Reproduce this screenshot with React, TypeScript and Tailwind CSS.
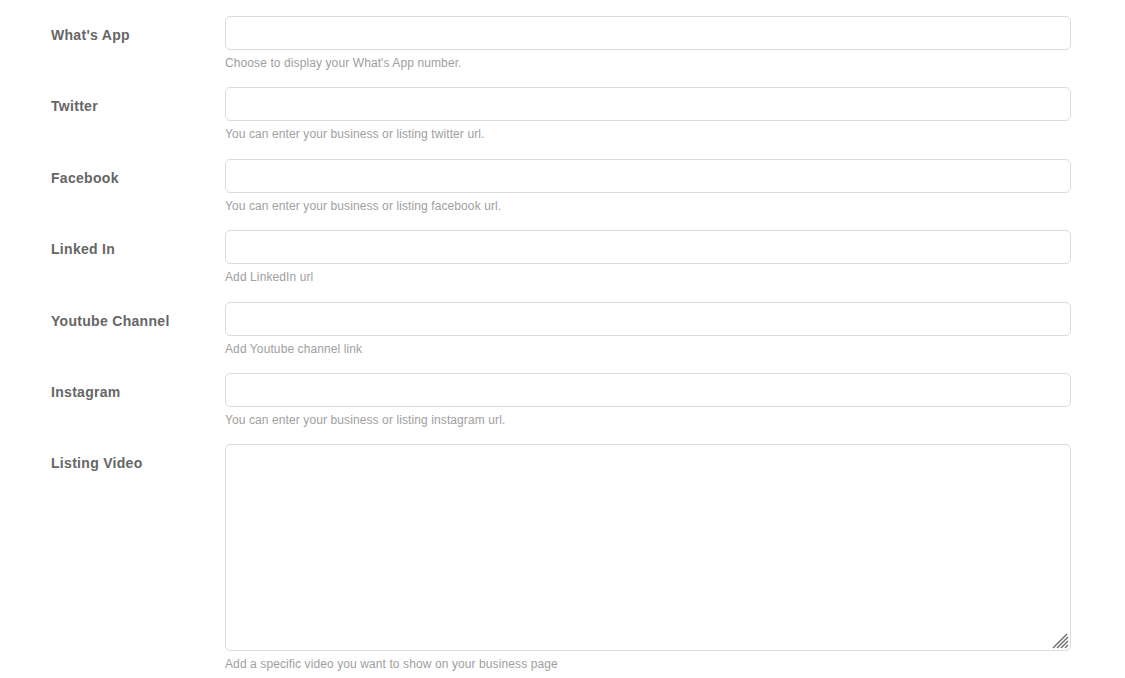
const fields = [
  { label: "What's App", help: "Choose to display your What's App number." },
  { label: 'Twitter', help: 'You can enter your business or listing twitter url.' },
  { label: 'Facebook', help: 'You can enter your business or listing facebook url.' },
  { label: 'Linked In', help: 'Add LinkedIn url' },
  { label: 'Youtube Channel', help: 'Add Youtube channel link' },
  { label: 'Instagram', help: 'You can enter your business or listing instagram url.' },
]

function ResizeGrip() {
  return (
    <svg className="pointer-events-none absolute right-[1px] bottom-[1px]" width="20" height="20" viewBox="0 0 20 20">
      <g stroke="#6f6f6f" strokeWidth="1.4">
        <line x1="3" y1="18" x2="17" y2="4" />
        <line x1="7" y1="18" x2="18" y2="7" />
        <line x1="11" y1="18" x2="18" y2="11" />
        <line x1="15" y1="18" x2="18" y2="15" />
      </g>
    </svg>
  )
}

export default function App() {
  return (
    <div className="min-h-[678px] bg-white pt-[16px] font-['Liberation_Sans',Arial,sans-serif]">
      {fields.map((f) => (
        <div key={f.label} className="flex pb-[16.4px]">
          <label className="w-[225px] shrink-0 pl-[51px] pt-[9px] text-[14px] leading-[20px] font-bold tracking-[0.3px] text-[#666]">
            {f.label}
          </label>
          <div className="w-[846px]">
            <input
              type="text"
              className="block h-[34px] w-full rounded-[5px] border border-[#dcdcdc] bg-white px-3 text-[13px] outline-none"
            />
            <p className="mt-[6px] text-[12px] leading-[15px] tracking-[0.1px] text-[#a0a0a0]">{f.help}</p>
          </div>
        </div>
      ))}
      <div className="flex">
        <label className="w-[225px] shrink-0 pl-[51px] pt-[9px] text-[14px] leading-[20px] font-bold tracking-[0.3px] text-[#666]">
          Listing Video
        </label>
        <div className="w-[846px]">
          <div className="relative">
            <textarea className="block h-[207px] w-full resize-none rounded-[5px] border border-[#dcdcdc] bg-white p-3 text-[13px] outline-none" />
            <ResizeGrip />
          </div>
          <p className="mt-[6px] text-[12px] leading-[15px] tracking-[0.1px] text-[#a0a0a0]">
            Add a specific video you want to show on your business page
          </p>
        </div>
      </div>
    </div>
  )
}
